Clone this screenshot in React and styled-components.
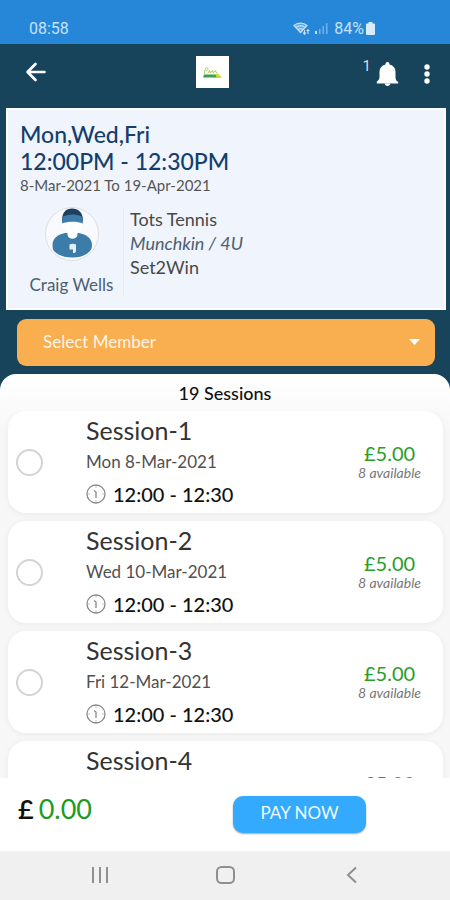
import React, { useState } from 'react';
import styled, { createGlobalStyle } from 'styled-components';

const GlobalStyle = createGlobalStyle`
  * {
    box-sizing: border-box;
  }

  body {
    margin: 0;
    font-family: Lato, 'Liberation Sans', sans-serif;
    color: #222;
    background: #17435b;
  }

  button,
  select {
    font-family: inherit;
  }
`;

const Screen = styled.div`
  display: flex;
  flex-direction: column;
  height: 100vh;
  background: #17435b;
`;

const StatusBar = styled.div`
  display: flex;
  flex: none;
  align-items: center;
  justify-content: space-between;
  height: 44px;
  padding: 12px 75px 0 29px;
  background: #2687d9;
  color: #c4e2fa;
  font-family: Roboto, sans-serif;
  font-size: 16px;
`;

const StatusIcons = styled.div`
  display: flex;
  align-items: center;
  gap: 5px;
`;

const Battery = styled.span`
  display: flex;
  align-items: center;
  gap: 2px;
`;

const AppBar = styled.header`
  display: flex;
  flex: none;
  align-items: center;
  justify-content: space-between;
  height: 64px;
  padding: 0 15px 8px 24px;
`;

const IconButton = styled.button`
  display: flex;
  align-items: center;
  justify-content: ${({ $align }) => $align || 'center'};
  width: ${({ $width }) => $width}px;
  height: 32px;
  padding: 0;
  border: 0;
  background: none;
  color: #fff;
`;

const Logo = styled.div`
  display: flex;
  align-items: center;
  justify-content: center;
  width: 33px;
  height: 32px;
  background: #fff;
`;

const Actions = styled.div`
  display: flex;
  align-items: center;
  gap: 20px;
  padding-top: 3px;
`;

const Notifications = styled.div`
  display: flex;
  gap: 4px;
`;

const Count = styled.span`
  color: #d5dde2;
  font-family: Roboto, sans-serif;
  font-size: 15px;
  line-height: 16px;
`;

const CourseCard = styled.section`
  flex: none;
  margin: 0 4px 0 6px;
  padding: 11px 12px;
  border: 2px solid #fcfdff;
  background: #f0f4fc;
`;

const CourseTitle = styled.h1`
  margin: 0;
  color: #143f6d;
  font-size: 23px;
  font-weight: 500;
  line-height: 27px;
`;

const CourseDates = styled.p`
  margin: 0;
  color: #555;
  font-size: 15px;
  line-height: 20px;
`;

const CourseInfo = styled.div`
  display: flex;
  margin-top: 12px;
`;

const Coach = styled.div`
  display: flex;
  flex-direction: column;
  align-items: center;
  gap: 12px;
  min-width: 104px;
  padding: 0 8px;
  border-right: 1px solid #e6eaf1;
  color: #4c6070;
  font-size: 17px;
  line-height: 24px;
`;

const Details = styled.div`
  padding-left: 6px;
  font-size: 18px;
  line-height: 24px;
`;

const Detail = styled.div`
  color: ${({ $level }) => ($level ? '#4c6070' : '#484848')};
  font-style: ${({ $level }) => ($level ? 'italic' : 'normal')};
`;

const MemberField = styled.div`
  position: relative;
  flex: none;
  margin: 9px 15px 8px 17px;
`;

const MemberSelect = styled.select`
  display: block;
  width: 100%;
  height: 47px;
  padding: 0 40px 3px 26px;
  border: 0;
  border-radius: 9px;
  appearance: none;
  background: #f9ae4f;
  color: #fff5e6;
  font-size: 17px;
`;

const Caret = styled.svg`
  position: absolute;
  top: 20px;
  right: 15px;
  pointer-events: none;
`;

const Sheet = styled.main`
  display: flex;
  flex: 1;
  flex-direction: column;
  min-height: 0;
  overflow: hidden;
  border-radius: 16px 16px 0 0;
  background: linear-gradient(#fff, #f7f7f7 60px);
`;

const SheetTitle = styled.h2`
  flex: none;
  margin: 0;
  padding: 7px 0 6px;
  color: #111;
  font-size: 18px;
  font-weight: 500;
  line-height: 24px;
  text-align: center;
`;

const SessionList = styled.ul`
  display: flex;
  flex: 1;
  flex-direction: column;
  gap: 8px;
  min-height: 0;
  margin: 0;
  padding: 0 7px 0 8px;
  overflow: hidden;
  list-style: none;
`;

const SessionCard = styled.li`
  flex: none;
  border-radius: 18px;
  background: #fff;
  box-shadow: 0 1px 6px rgba(0, 0, 0, 0.06);
`;

const SessionLabel = styled.label`
  display: flex;
  align-items: center;
  padding: 3px 22px 3px 8px;
`;

const Tick = styled.input`
  flex: none;
  width: 27px;
  height: 27px;
  margin: 0 43px 0 0;
  border: 2px solid #d3d3d3;
  border-radius: 50%;
  appearance: none;
  background: #fff;

  &:checked {
    border-color: #2fa8ff;
    background: #2fa8ff;
  }
`;

const SessionText = styled.div`
  flex: 1;
  line-height: 32px;
`;

const SessionName = styled.div`
  color: #333;
  font-size: 25px;
`;

const SessionDate = styled.div`
  color: #505050;
  font-size: 17px;
`;

const SessionTime = styled.div`
  display: flex;
  align-items: center;
  gap: 7px;
  color: #111;
  font-size: 20px;
  font-weight: 500;
`;

const PriceBlock = styled.div`
  text-align: center;
`;

const Price = styled.div`
  color: #2a9d2a;
  font-size: 20px;
  line-height: 22px;
`;

const Available = styled.div`
  color: #777;
  font-size: 14px;
  font-style: italic;
  line-height: 18px;
`;

const Footer = styled.footer`
  display: flex;
  flex: none;
  align-items: center;
  justify-content: space-between;
  padding: 18px 84px 18px 18px;
  background: #fff;
`;

const Total = styled.div`
  display: flex;
  gap: 5px;
  padding-bottom: 12px;
  color: #1c9c1c;
  font-size: 27px;
  line-height: 25px;
`;

const Currency = styled.span`
  color: #111;
  font-weight: 600;
`;

const PayButton = styled.button`
  height: 37px;
  min-width: 133px;
  padding: 0 12px 4px;
  border: 0;
  border-radius: 10px;
  background: #33aafd;
  box-shadow: 0 1px 2px rgba(0, 0, 0, 0.35);
  color: #f2faff;
  font-size: 17px;
`;

const NavBar = styled.nav`
  display: flex;
  flex: none;
  align-items: center;
  justify-content: space-around;
  height: 49px;
  padding: 0 37px 2px;
  background: #f0f0f0;
`;

const NavButton = styled.button`
  display: flex;
  padding: 0;
  border: 0;
  background: none;
`;

const sessions = [
  { name: 'Session-1', date: 'Mon 8-Mar-2021' },
  { name: 'Session-2', date: 'Wed 10-Mar-2021' },
  { name: 'Session-3', date: 'Fri 12-Mar-2021' },
  { name: 'Session-4', date: 'Mon 15-Mar-2021' },
];

const WifiIcon = () => (
  <svg width="17" height="13" viewBox="0 0 17 13" fill="none" stroke="#c4e2fa">
    <path d="M1 3.5C4.5 0.2 10.500 0.200 14 3.500L7.500 10.500Z" fill="#c4e2fa" fillOpacity="0.35" strokeWidth="1.200" />
    <path d="M3 5.500c2.700-2.300 6.300-2.300 9 0M5 7.700c1.500-1.200 3.500-1.200 5 0" strokeWidth="1.300" />
    <path d="M11.500 8v4M10 10.500l1.500 1.800 1.500-1.800M15 12V7.500M13.700 9L15 7.500 16.300 9" strokeWidth="1.100" />
  </svg>
);

const SignalIcon = () => (
  <svg width="14" height="13" viewBox="0 0 14 13" fill="#c4e2fa">
    <rect x="0" y="9" width="2" height="3" />
    <rect x="4" y="7" width="1.500" height="5" opacity="0.500" />
    <rect x="7.500" y="4" width="1.500" height="8" opacity="0.500" />
    <rect x="11" y="1" width="1.500" height="11" opacity="0.500" />
  </svg>
);

const BatteryIcon = () => (
  <svg width="9" height="13" viewBox="0 0 9 13" fill="#d8ecfc">
    <path d="M2.500 0h4v1.500H8a1 1 0 0 1 1 1V12a1 1 0 0 1-1 1H1a1 1 0 0 1-1-1V2.500a1 1 0 0 1 1-1h1.500z" />
  </svg>
);

const ArrowIcon = () => (
  <svg width="24" height="20" viewBox="0 0 24 20" fill="none" stroke="#fff" strokeWidth="2.600">
    <path d="M20.500 10H3.500M11.500 2L3.500 10l8 8" strokeLinecap="round" strokeLinejoin="round" />
  </svg>
);

const LogoIcon = () => (
  <svg width="21" height="13" viewBox="0 0 21 13" fill="none">
    <path d="M2 8.500h14l3 3H1z" fill="#3ea04a" />
    <path d="M2 8l1.500-5.500C5 1 7 2 5.500 4L4 5M6 7l1.500-2.500L8.500 7l2-2.500L11.500 7 13 4.500l2 2.500" stroke="#a5c86a" />
    <path d="M13.500 9c1-2 3-2 4 0l2.500 2.500h-5z" fill="#d9d83a" />
  </svg>
);

const BellIcon = () => (
  <svg width="23" height="26" viewBox="0 0 23 26" fill="#fff">
    <path d="M11.500 1a2 2 0 0 1 2 2v.500c4 1 6 4 6 7.500v5.500c0 2 1.200 3.500 2.700 4.500v1.500H.8V20.500c1.500-1 2.700-2.500 2.700-4.500V11c0-3.500 2-6.500 6-7.500V3a2 2 0 0 1 2-2z" />
    <path d="M8.800 22.500h5.400a2.700 2.500 0 0 1-5.400 0z" />
  </svg>
);

const MoreIcon = () => (
  <svg width="6" height="20" viewBox="0 0 6 20" fill="#fff">
    <circle cx="3" cy="3" r="2.700" />
    <circle cx="3" cy="10" r="2.700" />
    <circle cx="3" cy="17" r="2.700" />
  </svg>
);

const Avatar = () => (
  <svg width="54" height="54" viewBox="0 0 54 54">
    <circle cx="27" cy="27" r="26.500" fill="#f8fafd" stroke="#dddfe4" />
    <path d="M20 26c-7 1.500-12.500 5-12.500 12 0 3 .5 5 1.500 6 4 4.500 11 6.500 18.500 6.500S41 48.500 45 44c1-1 2-3 2-6 0-7-6-10.500-13-12z" fill="#3b7da8" />
    <path d="M17.500 16h20c0 5-2.500 8-5 9.500v2.500c-1 5-9 5-10 0v-2.500c-2.500-1.500-5-4.500-5-9.500z" fill="#fff" />
    <path d="M17 14C17 5 21 1.500 27 1.500S38 5 38 14z" fill="#203f5e" />
    <path d="M17.500 10c4-3.500 16-3.500 20 0l.5 6.500c-5-2.500-16-2.500-21 0z" fill="#3b7da8" />
    <path d="M24.500 37.500c2-1 4.500-1 6.500 0v6c0 2-1 2.500-3 2.500v-3.500h-3.500z" fill="#e6eff5" />
  </svg>
);

const ClockIcon = () => (
  <svg width="20" height="20" viewBox="0 0 20 20" fill="none" stroke="#888" strokeWidth="1.300">
    <circle cx="10" cy="10" r="9" />
    <path d="M8 6.500l2 1.500v6" />
    <path d="M10 2.500v1M10 16.500v1M2.500 10h1M16.500 10h1" strokeWidth="1" />
  </svg>
);

const Session = ({ name, date }) => (
  <SessionCard>
    <SessionLabel>
      <Tick type="checkbox" />
      <SessionText>
        <SessionName>{name}</SessionName>
        <SessionDate>{date}</SessionDate>
        <SessionTime>
          <ClockIcon />
          <span>12:00 - 12:30</span>
        </SessionTime>
      </SessionText>
      <PriceBlock>
        <Price>£5.00</Price>
        <Available>8 available</Available>
      </PriceBlock>
    </SessionLabel>
  </SessionCard>
);

const App = () => {
  const [member, setMember] = useState('');

  return (
    <>
      <GlobalStyle />
      <Screen>
        <StatusBar>
          <span>08:58</span>
          <StatusIcons>
            <WifiIcon />
            <SignalIcon />
            <Battery>
              84%
              <BatteryIcon />
            </Battery>
          </StatusIcons>
        </StatusBar>
        <AppBar>
          <IconButton $width={38} $align="flex-start" aria-label="Back">
            <ArrowIcon />
          </IconButton>
          <Logo>
            <LogoIcon />
          </Logo>
          <Actions>
            <Notifications>
              <Count>1</Count>
              <IconButton $width={24} aria-label="Notifications">
                <BellIcon />
              </IconButton>
            </Notifications>
            <IconButton $width={16} aria-label="More">
              <MoreIcon />
            </IconButton>
          </Actions>
        </AppBar>
        <CourseCard>
          <CourseTitle>
            Mon,Wed,Fri
            <br />
            12:00PM - 12:30PM
          </CourseTitle>
          <CourseDates>8-Mar-2021 To 19-Apr-2021</CourseDates>
          <CourseInfo>
            <Coach>
              <Avatar />
              <span>Craig Wells</span>
            </Coach>
            <Details>
              <Detail>Tots Tennis</Detail>
              <Detail $level>Munchkin / 4U</Detail>
              <Detail>Set2Win</Detail>
            </Details>
          </CourseInfo>
        </CourseCard>
        <MemberField>
          <MemberSelect
            aria-label="Select Member"
            value={member}
            onChange={(e) => setMember(e.target.value)}
          >
            <option value="">Select Member</option>
          </MemberSelect>
          <Caret width="11" height="6" viewBox="0 0 11 6" fill="#fff">
            <path d="M0 0h11L5.500 6z" />
          </Caret>
        </MemberField>
        <Sheet>
          <SheetTitle>19 Sessions</SheetTitle>
          <SessionList>
            {sessions.map((session) => (
              <Session key={session.name} {...session} />
            ))}
          </SessionList>
        </Sheet>
        <Footer>
          <Total>
            <Currency>£</Currency>
            <span>0.00</span>
          </Total>
          <PayButton>PAY NOW</PayButton>
        </Footer>
        <NavBar>
          <NavButton aria-label="Recent apps">
            <svg width="18" height="18" viewBox="0 0 18 18" stroke="#8f8f8f" strokeWidth="2">
              <path d="M2 1v16M9 1v16M16 1v16" />
            </svg>
          </NavButton>
          <NavButton aria-label="Home">
            <svg width="19" height="18" viewBox="0 0 19 18" fill="none" stroke="#8f8f8f" strokeWidth="2">
              <rect x="1" y="1" width="17" height="16" rx="4.500" />
            </svg>
          </NavButton>
          <NavButton aria-label="Go back">
            <svg width="18" height="18" viewBox="0 0 18 18" fill="none" stroke="#8f8f8f" strokeWidth="2">
              <path d="M14 1.500L6 9l8 7.500" />
            </svg>
          </NavButton>
        </NavBar>
      </Screen>
    </>
  );
};

export default App;
